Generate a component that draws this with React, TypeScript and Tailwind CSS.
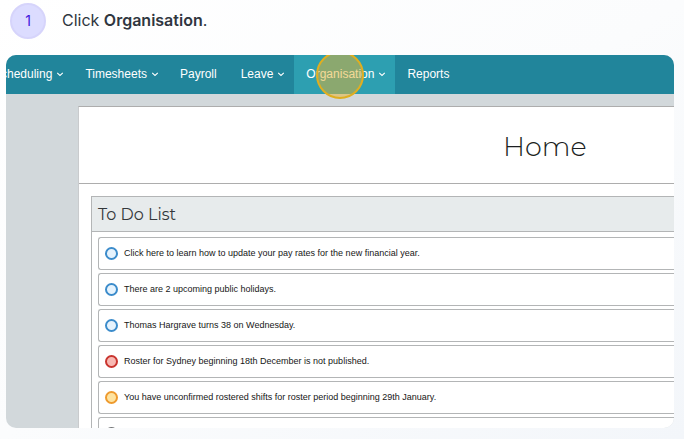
const arial = "font-['Liberation_Sans',Arial,sans-serif]";

type NavEntry = { label: string; menu?: boolean; active?: boolean };

const navEntries: NavEntry[] = [
  { label: "Scheduling", menu: true },
  { label: "Timesheets", menu: true },
  { label: "Payroll" },
  { label: "Leave", menu: true },
  { label: "Organisation", menu: true, active: true },
  { label: "Reports" },
];

const blue = "border-[#3c8ccb] bg-[#e6f3fd]";
const red = "border-[#c9352f] bg-[#f8b9b3]";
const amber = "border-[#ee9a2e] bg-[#fee3a0]";

const todos = [
  { text: "Click here to learn how to update your pay rates for the new financial year.", tone: blue },
  { text: "There are 2 upcoming public holidays.", tone: blue },
  { text: "Thomas Hargrave turns 38 on Wednesday.", tone: blue },
  { text: "Roster for Sydney beginning 18th December is not published.", tone: red },
  { text: "You have unconfirmed rostered shifts for roster period beginning 29th January.", tone: amber },
  { text: "", tone: "border-[#77797b] bg-[#eeeeee]" },
];

function Chevron() {
  return (
    <svg className="h-2 w-2 shrink-0" viewBox="0 0 8 8" fill="none" stroke="currentColor" strokeWidth="1.1" aria-hidden="true">
      <path d="M1.2 2.8 4 5.4 6.8 2.8" />
    </svg>
  );
}

function NavItem({ label, menu, active }: NavEntry) {
  if (!menu) {
    return (
      <a href="#" className="flex shrink-0 items-center px-3 pb-px">
        {label}
      </a>
    );
  }
  return (
    <button
      type="button"
      aria-haspopup="menu"
      className={`relative flex shrink-0 items-center gap-1 pr-[9px] pb-px pl-3 ${active ? "bg-[#2d9fb1]" : ""}`}
    >
      {label}
      <Chevron />
      {active && (
        <span className="absolute -top-1 left-[22px] h-12 w-12 rounded-full border-2 border-[#dfae20] bg-[#e9b12e]/50" />
      )}
    </button>
  );
}

export default function App() {
  return (
    <main className="h-screen min-h-[300px] overflow-hidden bg-linear-to-br from-white via-[#fbfcfd] to-[#f3f6fa] pr-[10px] pb-[11px] pl-[6px]">
      <div className="flex h-full flex-col">
        <header className="flex h-[55px] shrink-0 items-start gap-4 pt-[3px] pl-1 font-['Inter',sans-serif]">
          <span className="flex h-9 w-9 items-center justify-center rounded-full border-2 border-[#d6d4fb] bg-[#dcdcff] text-sm text-[#4316dc]">
            1
          </span>
          <h1 className="pt-[5px] text-base leading-6 text-[#303640]">
            Click <strong className="font-semibold">Organisation</strong>.
          </h1>
        </header>

        <section className="flex min-h-0 grow flex-col overflow-hidden rounded-[10px] bg-[#d2d8db]">
          <nav className={`flex h-[39px] shrink-0 bg-[#21859b] text-xs text-white ${arial}`}>
            <div className="-ml-[25px] flex">
              {navEntries.map((entry) => (
                <NavItem key={entry.label} {...entry} />
              ))}
            </div>
          </nav>

          <div className="mt-3 ml-[72px] grow border-t border-l border-t-[#adadad] border-l-[#c9cbcd] bg-white">
            <div className="flex h-[77px] items-center border-b border-[#adadad] pt-[3px] pl-[424px]">
              <h2 className="font-['Montserrat','Inter',sans-serif] text-[27px] leading-9 font-light text-[#1c1f22]">Home</h2>
            </div>

            <div className="mt-3 ml-3 border-t border-l border-[#b3b5b6]">
              <h3 className="h-[35px] border-b border-[#b3b5b6] bg-[#e7ebec] pl-[6px] font-['Montserrat','Inter',sans-serif] text-base leading-9 text-[#34383b]">
                To Do List
              </h3>
              <ul className={`flex flex-col gap-[3px] pt-[5px] pl-[6px] text-[9px] text-[#161616] ${arial}`}>
                {todos.map(({ text, tone }) => (
                  <li key={text}>
                    <a
                      href="#"
                      className="flex h-[33px] items-center gap-[6px] rounded-l-[3px] border-y border-l border-[#b3b5b6] pl-[6px]"
                    >
                      <span className={`h-[13px] w-[13px] shrink-0 rounded-full border-2 ${tone}`} />
                      {text}
                    </a>
                  </li>
                ))}
              </ul>
            </div>
          </div>
        </section>
      </div>
    </main>
  );
}
